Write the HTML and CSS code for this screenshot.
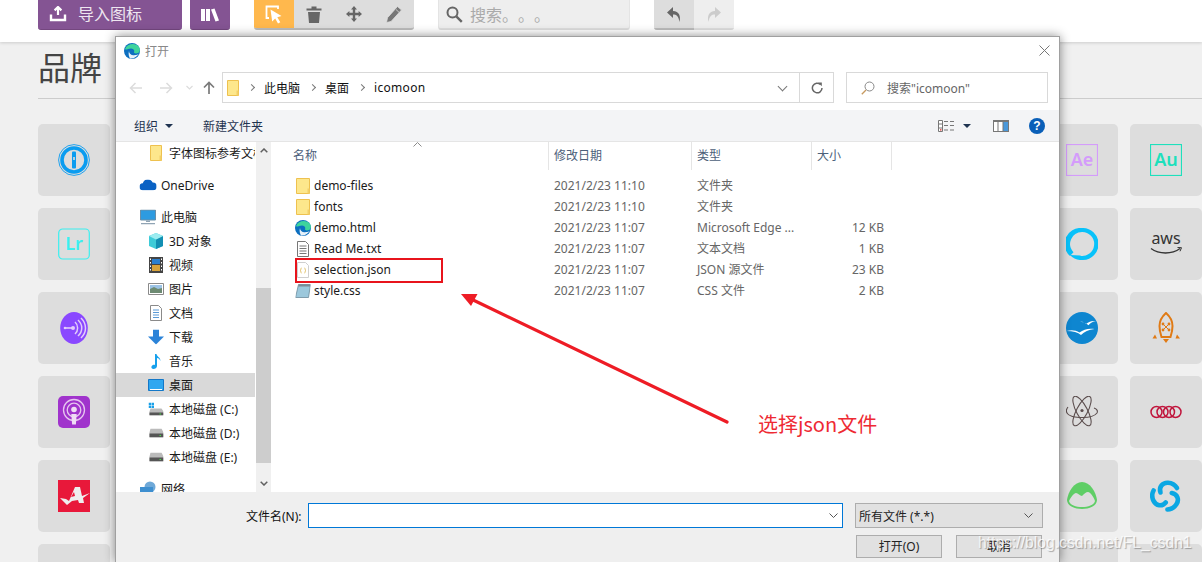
FILE: index.html
```html
<!DOCTYPE html>
<html lang="zh">
<head>
<meta charset="utf-8">
<title>IcoMoon</title>
<link rel="stylesheet" href="styles.css">
</head>
<body>
<header class="topbar">
  <button class="btn purple import">
    <svg width="18" height="16" viewBox="0 0 18 16"><path d="M9 1v8M5.6 4.400 9 1l3.400 3.400" fill="none" stroke="#fff" stroke-width="2.200"/><path d="M2 8.500v5.500h14V8.500" fill="none" stroke="#fff" stroke-width="2.400"/></svg>
    <span>导入图标</span>
  </button>
  <button class="btn purple lib">
    <svg width="20" height="14" viewBox="0 0 20 14"><path d="M1 1h4v12H1zM6 1h4v12H6zM11 1.500l3.500-1L19 12.500 15.500 13.500z" fill="#fff"/></svg>
  </button>
  <div class="group tools">
    <span class="tool active">
      <svg width="18" height="20" viewBox="0 0 18 20"><path d="M13 4V1.500H1.500V13H4" fill="none" stroke="#fff" stroke-width="1.800"/><path d="M5.500 4.500 16.500 11l-4.200 1.200 3 5-2.300 1.300-2.800-5-3 3z" fill="#fff"/></svg>
    </span>
    <span class="tool">
      <svg width="16" height="17" viewBox="0 0 16 17"><path d="M0.500 2.500h15v2H0.500zM5.500 2.500V0.500h5v2M2 6h12l-1 11H3z" fill="#666"/></svg>
    </span>
    <span class="tool">
      <svg width="16" height="16" viewBox="0 0 16 16"><path d="M8 0 11 3.400H9.200v3.400h3.400V5L16 8l-3.400 3v-1.800H9.200v3.400H11L8 16l-3-3.400h1.800V9.200H3.400V11L0 8l3.400-3v1.800h3.400V3.400H5z" fill="#666"/></svg>
    </span>
    <span class="tool">
      <svg width="16" height="17" viewBox="0 0 16 17"><path d="M11.500 0.500 15.500 4 5 15.500 0.500 16.500 1.500 11.700zM10 3.500l3 2.800" fill="#777" stroke="#ddd" stroke-width="0.800"/></svg>
    </span>
  </div>
  <div class="searchbox">
    <svg width="17" height="17" viewBox="0 0 17 17"><circle cx="6.500" cy="6.500" r="5" fill="none" stroke="#666" stroke-width="2"/><path d="m10.300 10.300 5.500 5.500" stroke="#666" stroke-width="2.400"/></svg>
    <span>搜索。。。</span>
  </div>
  <div class="group history">
    <span class="tool undo">
      <svg width="14" height="15" viewBox="0 0 14 15"><path d="M6 0 0 5.500 6 11V7.500c3.500 0 5.500 1.500 6.500 7.500 1.500-6-.5-11-6.500-11z" fill="#666"/></svg>
    </span>
    <span class="tool redo">
      <svg width="14" height="15" viewBox="0 0 14 15"><path d="M8 0l6 5.500L8 11V7.500c-3.500 0-5.500 1.500-6.500 7.500C0 9 2 4 8 4z" fill="#ccc"/></svg>
    </span>
  </div>
</header>

<main class="content">
  <h1 class="heading">品牌</h1>
  <div class="tiles">
    <div class="tile">
      <svg class="ico" viewBox="0 0 32 32"><circle cx="16" cy="16" r="15.400" fill="none" stroke="#0a9cf0" stroke-width="0.900"/><circle cx="16" cy="16" r="12" fill="none" stroke="#0a9cf0" stroke-width="3.600"/><rect x="14" y="7.500" width="4" height="17" rx="1" fill="#0a9cf0"/><path d="M15.200 13h1.600v3h-1.600z" fill="#ddd"/></svg>
    </div>
    <div class="tile c13">
      <svg class="ico" viewBox="0 0 32 32"><rect x="0.500" y="0.500" width="31" height="31" fill="none" stroke="#d49cfb" stroke-width="1.200"/><text x="16" y="21.500" class="lg" fill="#d49cfb">Ae</text></svg>
    </div>
    <div class="tile">
      <svg class="ico" viewBox="0 0 32 32"><rect x="0.500" y="0.500" width="31" height="31" fill="none" stroke="#1ee0bc" stroke-width="1.200"/><text x="16" y="21.500" class="lg" fill="#1ee0bc">Au</text></svg>
    </div>

    <div class="tile">
      <svg class="ico" viewBox="0 0 32 32"><rect x="0.700" y="1" width="30.600" height="30" rx="4" fill="none" stroke="#3af0f0" stroke-width="1.200"/><text x="16" y="22" class="lg" fill="#3af0f0">Lr</text></svg>
    </div>
    <div class="tile c13">
      <svg class="ico" viewBox="0 0 32 32"><path d="M16 0a16 16 0 0 1 1 32l-3.500 0 .5-4.200A12 12 0 1 0 16 4a12 12 0 0 0-8.500 20.300L4 28A16 16 0 0 1 16 0z" fill="#08c2fa"/><path d="M4 27A16 16 0 0 0 14 32l.4-4.500z" fill="#08c2fa"/></svg>
    </div>
    <div class="tile">
      <svg class="ico" viewBox="0 0 32 32"><text x="16" y="16" class="aws">aws</text><path d="M1 20.500c8 6 21 6 29 0" fill="none" stroke="#333" stroke-width="1.400"/><path d="M27.500 19.500l4 .2-1.500 3.600" fill="none" stroke="#333" stroke-width="1"/></svg>
    </div>

    <div class="tile">
      <svg class="ico" viewBox="0 0 32 32"><ellipse cx="16" cy="16" rx="13.800" ry="16" fill="#8a48ff"/><path d="M6 16h9" stroke="#e3cdfb" stroke-width="1.600"/><circle cx="7" cy="16" r="1.300" fill="#e3cdfb"/><circle cx="15" cy="16" r="2" fill="#e3cdfb"/><path d="M17 10c3.500 3 3.500 9 0 12M20 8c5 4.500 5 11.500 0 16M23 6c6 6 6 14 0 20" fill="none" stroke="#e3cdfb" stroke-width="1.500"/></svg>
    </div>
    <div class="tile c13">
      <svg class="ico" viewBox="0 0 32 32"><circle cx="16" cy="16" r="16" fill="#0e86d0"/><path d="M14 9c3 1.500 5 1.500 6 3 2-2 5-3.500 10-3-3 .5-6 2-7.500 4.200C20 11 17 10 14 9z" fill="#fff"/><path d="M0.500 19c5-1.500 9-1 13 1.500 4-3 9-4.500 15-3.500-6 .5-10 2.500-13.500 6C12 20.500 7 19 0.500 19z" fill="#fff"/></svg>
    </div>
    <div class="tile">
      <svg class="ico" viewBox="0 0 32 32"><path d="M16 1c4.500 4 6.500 9 6.500 13 0 4-1 8-2 11h-9c-1-3-2-7-2-11C9.500 10 11.500 5 16 1z" fill="none" stroke="#e07a14" stroke-width="2"/><path d="M13 12l6 6M19 12l-6 6" stroke="#e07a14" stroke-width="1"/><circle cx="13" cy="12" r="1.400" fill="#e07a14"/><circle cx="19" cy="12" r="1.400" fill="#e07a14"/><circle cx="13" cy="18" r="1.400" fill="#e07a14"/><circle cx="19" cy="18" r="1.400" fill="#e07a14"/><path d="M5 22.500l-2.500 4h4.500zM27 22.500l-1.500 4H30zM13 27h6l-3 4z" fill="#e07a14"/></svg>
    </div>

    <div class="tile">
      <svg class="ico" viewBox="0 0 32 32"><rect x="0" y="0" width="32" height="32" rx="5" fill="#a033cc"/><circle cx="16" cy="14" r="10.500" fill="none" stroke="#e6c5ef" stroke-width="1.300"/><circle cx="16" cy="14" r="6.800" fill="none" stroke="#e6c5ef" stroke-width="1.300"/><circle cx="16" cy="13.500" r="2.800" fill="#efdcf5"/><path d="M13.300 18h5.400l-.8 10.500h-3.800z" fill="#efdcf5"/></svg>
    </div>
    <div class="tile c13">
      <svg class="ico" viewBox="0 0 32 32"><g fill="none" stroke="#5b4d4d" stroke-width="1.100"><ellipse cx="16" cy="15" rx="16.500" ry="5.500" transform="rotate(62 16 15)"/><ellipse cx="16" cy="15" rx="16.500" ry="5.500" transform="rotate(-62 16 15)"/><path d="M2 11C-2 16 2 20 9 21c8 1 18 1 22-4 1-2 0-4-3-5"/></g><circle cx="16" cy="14.500" r="1.600" fill="#5b4d4d"/></svg>
    </div>
    <div class="tile">
      <svg class="ico" viewBox="0 0 32 32"><g fill="none" stroke="#c0153c" stroke-width="1.500"><circle cx="6.500" cy="16" r="5.500"/><circle cx="12.500" cy="16" r="5.500"/><circle cx="19" cy="16" r="5.500"/><circle cx="25.500" cy="16" r="5.500"/></g></svg>
    </div>

    <div class="tile">
      <svg class="ico" viewBox="0 0 32 32"><rect width="32" height="32" fill="#e8183a"/><path d="M17 7h5l2 9 8-3-7 5 1 5h-5l-1-3-6 1-5 4-7-7 6 1 3 2zM16 12l-3 5 4-1z" fill="#eee" fill-rule="evenodd"/></svg>
    </div>
    <div class="tile c13">
      <svg class="ico" viewBox="0 0 32 32"><path d="M16 2C8 2 2 12 1 20c0 6 8 9 15 9s15-3 15-9C30 12 24 2 16 2z" fill="#5fce66"/><path d="M3 21c2-4 5-8 7-8 2 0 4 3 6 3 2-2 4-4 6-4 2 0 6 5 7 9-1 4-7 6-13 6S4 25 3 21z" fill="#ddd"/></svg>
    </div>
    <div class="tile">
      <svg class="ico" viewBox="0 0 32 32"><g fill="none" stroke="#0ba7e3" stroke-width="4.600" stroke-linecap="round"><path d="M10.500 12.500C8.500 7 12.500 2.500 18 2.800c4 .2 7 2 9 5.200"/><path d="M10.500 12.500C8.500 7 12.500 2.500 18 2.800c4 .2 7 2 9 5.200" transform="rotate(120 16 16)"/><path d="M10.500 12.500C8.500 7 12.500 2.500 18 2.800c4 .2 7 2 9 5.200" transform="rotate(240 16 16)"/></g></svg>
    </div>
    <div class="tile"></div>
    <div class="tile c13"></div>
    <div class="tile"></div>
  </div>
</main>

<section class="dialog">
  <div class="titlebar">
    <svg class="edge" width="16" height="16" viewBox="0 0 16 16"><circle cx="8" cy="8" r="8" fill="#0c6fc0"/><path d="M1 6C3 1 11-1 15 4c1.500 2 1 5-1 6-2 .8-4 .5-4-1 1-2-1-3.500-3-3.500-3 0-5 2-6 .5z" fill="#3ed49c"/><path d="M5 8c0 3 3 5 6 4 1.500 0 3-.5 4-1.500-2 3-5 5.500-9 5C5 14 4 11 5 8z" fill="#fff" opacity=".9"/></svg>
    <span class="title">打开</span>
    <svg class="close" width="11" height="11" viewBox="0 0 11 11"><path d="m.5.500 10 10M10.500.500l-10 10" stroke="#777" fill="none"/></svg>
  </div>
  <div class="addressrow">
    <svg class="nav back" width="14" height="12" viewBox="0 0 14 12"><path d="M13 6H1.500M6.500 1l-5 5 5 5" fill="none" stroke="#dcdcdc" stroke-width="1.500"/></svg>
    <svg class="nav forward" width="14" height="12" viewBox="0 0 14 12"><path d="M1 6h11.500M7.500 1l5 5-5 5" fill="none" stroke="#dcdcdc" stroke-width="1.500"/></svg>
    <svg class="nav recent" width="7" height="5" viewBox="0 0 7 5"><path d="m.5 1 3 3 3-3" fill="none" stroke="#dcdcdc" stroke-width="1.200"/></svg>
    <svg class="nav up" width="12" height="13" viewBox="0 0 12 13"><path d="M6 13V1.500M1 6.500l5-5 5 5" fill="none" stroke="#7a7a7a" stroke-width="1.700"/></svg>
    <div class="address">
      <svg width="12" height="16" viewBox="0 0 12 16"><path d="M.5.500h11v15H.5z" fill="#fde78c" stroke="#eec14f"/><path d="M9.500 10.500h2v5h-2z" fill="#f2cf68"/></svg>
      <span class="crumbsep"></span><span>此电脑</span>
      <span class="crumbsep"></span><span>桌面</span>
      <span class="crumbsep"></span><span class="crumb-last">icomoon</span>
      <span class="addr-chevron"></span>
      <span class="refresh">
        <svg width="12" height="12" viewBox="0 0 12 12"><path d="M9.500 2.500A4.800 4.800 0 1 0 11 6" fill="none" stroke="#666" stroke-width="1.500"/><path d="M7 .5h3.800v3.800z" fill="#666"/></svg>
      </span>
    </div>
    <div class="dsearch">
      <svg width="14" height="14" viewBox="0 0 14 14"><circle cx="8.500" cy="5.500" r="4.500" fill="none" stroke="#888"/><path d="M5 9 .8 13.200" stroke="#c79a60" stroke-width="1.300"/></svg>
      <span>搜索"icomoon"</span>
    </div>
  </div>
  <div class="commandbar">
    <span class="cmd">组织<i class="caret"></i></span>
    <span class="cmd new">新建文件夹</span>
    <span class="cmd-right">
      <svg width="16" height="12" viewBox="0 0 16 12"><path d="M.5.500h4v11h-4zM.5 4h4M.5 8h4" fill="#fff" stroke="#777"/><path d="M6 1.500h4M12 1.500h4M6 5.500h4M12 5.500h4M6 10h4M12 10h4" stroke="#777"/><path d="M2 9.300h1.500v1.200H2z" fill="#d22"/></svg>
      <i class="caret view"></i>
      <svg class="pane" width="16" height="12" viewBox="0 0 16 12"><path d="M0 0h16v12H0z" fill="#777"/><path d="M1 2h3.500v9H1zM5.500 2h4v9h-4z" fill="#fff"/><path d="M10.500 2h4.500v9h-4.500z" fill="#4a98da"/></svg>
      <span class="help">?</span>
    </span>
  </div>

  <div class="browser">
    <nav class="tree">
      <div class="tree-row sub cut"><svg class="ti" width="12" height="16" viewBox="0 0 12 16"><path d="M.5.500h11v15H.5z" fill="#fde78c" stroke="#eec14f"/><path d="M9.500 10.500h2v5h-2z" fill="#f2cf68"/></svg><span>字体图标参考文档</span></div>
      <div class="tree-row top gap"><svg class="ti" width="17" height="11" viewBox="0 0 16 10"><path d="M3.500 10a3.300 3.300 0 0 1-.4-6.600 5 5 0 0 1 9.300-.8 3.700 3.700 0 0 1 .3 7.400z" fill="#0a62c4"/></svg><span>OneDrive</span></div>
      <div class="tree-row top gap"><svg class="ti" width="16" height="15" viewBox="0 0 16 15"><path d="M.5.500h15v10H.5z" fill="#2e9be0" stroke="#6b8fa8"/><path d="M6 11h4v1.500H6zM1 13.500h14V15H1z" fill="#90a4b4"/></svg><span>此电脑</span></div>
      <div class="tree-row sub"><svg class="ti" width="16" height="16" viewBox="0 0 16 16"><path d="M8 0l7 3v10l-7 3-7-3V3z" fill="#3dcbd8"/><path d="M8 6.500v9.500l7-3V3z" fill="#128fb3"/><path d="M1 3l7 3.500L15 3 8 0z" fill="#9cecf0"/></svg><span>3D 对象</span></div>
      <div class="tree-row sub"><svg class="ti" width="14" height="16" viewBox="0 0 14 16"><path d="M0 0h14v16H0z" fill="#444"/><path d="M3 2h8v5H3z" fill="#2b7fce"/><path d="M3 8h8v6H3z" fill="#d8a33b"/><path d="M1 1.500h1v1.500H1zM1 5h1v1.500H1zM1 8.500h1V10H1zM1 12h1v1.500H1zM12 1.500h1v1.500h-1zM12 5h1v1.500h-1zM12 8.500h1V10h-1zM12 12h1v1.500h-1z" fill="#fff"/></svg><span>视频</span></div>
      <div class="tree-row sub"><svg class="ti" width="16" height="12" viewBox="0 0 16 12"><path d="M.5.500h15v11H.5z" fill="#fff" stroke="#8a8a8a"/><path d="M2 2h12v4H2z" fill="#9cc3e6"/><path d="M2 6l4-2 4 2 4-1v5H2z" fill="#6d8a72"/></svg><span>图片</span></div>
      <div class="tree-row sub"><svg class="ti" width="12" height="16" viewBox="0 0 12 16"><path d="M.5.500h8l3 3v12H.5z" fill="#fff" stroke="#8a8a8a"/><path d="M3 5h6M3 7.500h6M3 10h6M3 12.500h6" stroke="#5a9ad6"/></svg><span>文档</span></div>
      <div class="tree-row sub"><svg class="ti" width="16" height="15" viewBox="0 0 16 15"><path d="M5 0h6v7h5l-8 8-8-8h5z" fill="#2b83d8"/></svg><span>下载</span></div>
      <div class="tree-row sub"><svg class="ti" width="14" height="16" viewBox="0 0 14 16"><path d="M6 1h1.500c.5 3 4 3 4 7-1-2-2-3-3.500-3v8c0 2-2 3-3.500 3S2 15 2.500 13.500 5 11.500 6 12z" fill="#16a0ec"/></svg><span>音乐</span></div>
      <div class="tree-row sub selected"><svg class="ti" width="16" height="12" viewBox="0 0 16 12"><path d="M.5.500h15v11H.5z" fill="#2fa7f0" stroke="#1478c8"/><path d="M2 10.500h12" stroke="#fff"/></svg><span>桌面</span></div>
      <div class="tree-row sub"><svg class="ti" width="15" height="13" viewBox="0 0 15 13"><path d="M0 0h2.500v2.500H0zM3 0h2.500v2.500H3zM0 3h2.500v2.500H0zM3 3h2.500v2.500H3z" fill="#19a0e8"/><path d="M2 6h11l2 3v4H1V9z" fill="#bbb"/><path d="M1 10h14v3H1z" fill="#555"/><path d="M11 11h1.500v1H11z" fill="#4d4"/></svg><span>本地磁盘 (C:)</span></div>
      <div class="tree-row sub"><svg class="ti" width="15" height="9" viewBox="0 0 15 9"><path d="M2 0h11l2 4v5H1V4z" fill="#bbb"/><path d="M1 5h14v4H1z" fill="#555"/><path d="M11 6.500h1.500v1H11z" fill="#4d4"/></svg><span>本地磁盘 (D:)</span></div>
      <div class="tree-row sub"><svg class="ti" width="15" height="9" viewBox="0 0 15 9"><path d="M2 0h11l2 4v5H1V4z" fill="#bbb"/><path d="M1 5h14v4H1z" fill="#555"/><path d="M11 6.500h1.500v1H11z" fill="#4d4"/></svg><span>本地磁盘 (E:)</span></div>
      <div class="tree-row top gap"><svg class="ti" width="16" height="16" viewBox="0 0 16 16"><circle cx="10" cy="6" r="5.500" fill="#6fa9d8"/><path d="M0 6h13v10H0z" fill="#3e8fd0"/></svg><span>网络</span></div>
    </nav>
    <div class="scrollbar">
      <span class="sb-arrow"><svg width="8" height="5" viewBox="0 0 8 5"><path d="M.7 4.300 4 1l3.300 3.300" fill="none" stroke="#606060" stroke-width="1.500"/></svg></span>
      <span class="sb-track"><i class="sb-thumb"></i></span>
      <span class="sb-arrow"><svg width="8" height="5" viewBox="0 0 8 5"><path d="M.7.700 4 4 7.300.700" fill="none" stroke="#606060" stroke-width="1.500"/></svg></span>
    </div>
    <div class="files">
      <div class="colhead">
        <span class="hcell name">名称<svg class="sort" width="9" height="5" viewBox="0 0 9 5"><path d="M.5 4.500l4-4 4 4" fill="none" stroke="#8a8a8a"/></svg></span>
        <span class="hcell">修改日期</span>
        <span class="hcell">类型</span>
        <span class="hcell">大小</span>
      </div>
      <div class="row">
        <span class="fname"><svg class="fi" width="14" height="16" viewBox="0 0 14 16"><path d="M.5.500h13v15H.5z" fill="#fde78c" stroke="#eec14f"/><path d="M11.500 10.500h2v5h-2z" fill="#f2cf68"/></svg>demo-files</span>
        <span class="meta">2021/2/23 11:10</span><span class="meta">文件夹</span><span class="meta size"></span>
      </div>
      <div class="row">
        <span class="fname"><svg class="fi" width="14" height="16" viewBox="0 0 14 16"><path d="M.5.500h13v15H.5z" fill="#fde78c" stroke="#eec14f"/><path d="M11.500 10.500h2v5h-2z" fill="#f2cf68"/></svg>fonts</span>
        <span class="meta">2021/2/23 11:10</span><span class="meta">文件夹</span><span class="meta size"></span>
      </div>
      <div class="row">
        <span class="fname"><svg class="fi" width="16" height="16" viewBox="0 0 16 16"><circle cx="8" cy="8" r="8" fill="#0c6fc0"/><path d="M1 6C3 1 11-1 15 4c1.500 2 1 5-1 6-2 .8-4 .5-4-1 1-2-1-3.500-3-3.500-3 0-5 2-6 .5z" fill="#3ed49c"/><path d="M5 8c0 3 3 5 6 4 1.500 0 3-.5 4-1.500-2 3-5 5.500-9 5C5 14 4 11 5 8z" fill="#fff" opacity=".9"/></svg>demo.html</span>
        <span class="meta">2021/2/23 11:07</span><span class="meta">Microsoft Edge ...</span><span class="meta size">12 KB</span>
      </div>
      <div class="row">
        <span class="fname"><svg class="fi" width="12" height="16" viewBox="0 0 12 16"><path d="M.5.500h8l3 3v12H.5z" fill="#fff" stroke="#777"/><path d="M2.500 5h7M2.500 7.500h7M2.500 10h7M2.500 12.500h7" stroke="#777"/></svg>Read Me.txt</span>
        <span class="meta">2021/2/23 11:07</span><span class="meta">文本文档</span><span class="meta size">1 KB</span>
      </div>
      <div class="row">
        <span class="fname"><svg class="fi" width="12" height="16" viewBox="0 0 12 16"><path d="M.5.500h8l3 3v12H.5z" fill="#fff" stroke="#cfcfcf"/><path d="M4.500 6c-1 0-.5 2-1 2.500.5.500 0 2.500 1 2.500M7.500 6c1 0 .5 2 1 2.500-.5.500 0 2.500-1 2.500" fill="none" stroke="#d8b040" stroke-width=".8"/></svg>selection.json</span>
        <span class="meta">2021/2/23 11:07</span><span class="meta">JSON 源文件</span><span class="meta size">23 KB</span>
      </div>
      <div class="row">
        <span class="fname"><svg class="fi" width="15" height="15" viewBox="0 0 15 15"><path d="M3 1h12l-2 13H0z" fill="#9cc8dc" stroke="#6b8a9a" stroke-width=".8"/><path d="M3 1h12v2H3z" fill="#7a8c96"/></svg>style.css</span>
        <span class="meta">2021/2/23 11:07</span><span class="meta">CSS 文件</span><span class="meta size">2 KB</span>
      </div>
    </div>
  </div>

  <footer class="dfoot">
    <div class="foot-row">
      <label class="fn-label">文件名(N):</label>
      <div class="fn-input"><svg width="9" height="5" viewBox="0 0 9 5"><path d="m.5.500 4 4 4-4" fill="none" stroke="#555"/></svg></div>
      <div class="filetype"><span>所有文件 (*.*)</span><svg width="9" height="5" viewBox="0 0 9 5"><path d="m.5.500 4 4 4-4" fill="none" stroke="#555"/></svg></div>
    </div>
    <div class="foot-actions">
      <span class="dbtn">打开(O)</span>
      <span class="dbtn">取消</span>
    </div>
  </footer>
</section>

<div class="redbox"></div>
<svg class="arrow" width="1202" height="562" viewBox="0 0 1202 562"><path d="M727 422 469 298" stroke="#ee1c25" stroke-width="3.200" stroke-linecap="round"/><path d="M461 294h16.500l-6.500 12z" fill="#ee1c25"/></svg>
<div class="note">选择json文件</div>
<div class="watermark">https://blog.csdn.net/FL_csdn1</div>
</body>
</html>
```

FILE: styles.css
```css
* { box-sizing: border-box; }
html, body { margin: 0; height: 562px; overflow: hidden; }
body {
  position: relative;
  width: 1202px;
  background: #f0f0f0;
  font-family: "Noto Sans", "Noto Sans CJK SC", sans-serif;
  font-size: 12px;
  color: #222;
  text-spacing-trim: space-all;
}

/* app header */
.topbar {
  height: 42px;
  background: #fff;
  box-shadow: 0 1px 3px rgba(0, 0, 0, .15);
  display: flex;
  align-items: flex-start;
  padding-left: 38px;
}
.btn {
  border: 0;
  padding: 0;
  height: 30px;
  border-radius: 0 0 3px 3px;
  display: flex;
  align-items: center;
  justify-content: center;
  color: #fff;
  font: inherit;
}
.purple { background: #845493; border-bottom: 1px solid #74477f; }
.import { width: 144px; gap: 11px; justify-content: flex-start; padding: 0 0 2px 11px; font-size: 16px; line-height: 20px; color: #eee6f0; }
.lib { width: 40px; margin-left: 8px; }
.group { display: flex; height: 30px; border-radius: 0 0 3px 3px; overflow: hidden; }
.tools { margin-left: 24px; border-bottom: 2px solid #bbb; background: #ddd; }
.tool { width: 40px; height: 30px; display: flex; align-items: center; justify-content: center; }
.tools .tool { height: 28px; }
.tools .tool.active { background: #ffb84d; height: 30px; margin-bottom: -2px; }
.searchbox {
  margin-left: 24px;
  width: 192px;
  height: 30px;
  background: #eee;
  border-bottom: 2px solid #ddd;
  border-left: 1px solid #e4e4e4;
  border-right: 1px solid #e4e4e4;
  border-radius: 0 0 3px 3px;
  display: flex;
  align-items: center;
  gap: 7px;
  padding-left: 7px;
  color: #aaa;
  font-size: 16px;
}
.history { margin-left: 24px; }
.undo { background: #ddd; border-bottom: 2px solid #bbb; }
.redo { background: #eee; border-bottom: 2px solid #ddd; }

/* app page body */
.content { height: 520px; overflow: hidden; padding-left: 38px; }
.heading {
  margin: 0;
  height: 57px;
  padding-top: 1px;
  border-bottom: 1px solid #ccc;
  font-size: 32px;
  font-weight: 400;
  line-height: 50px;
  color: #444;
}
.tiles {
  margin-top: 25px;
  display: grid;
  grid-template-columns: repeat(14, 72px);
  grid-auto-rows: 72px;
  gap: 12px;
}
.tile {
  background: #ddd;
  border-radius: 5px;
  display: flex;
  align-items: center;
  justify-content: center;
}
.c13 { grid-column: 13; }
.ico { width: 32px; height: 32px; display: block; }
.lg { font: 600 18px "Noto Sans", sans-serif; text-anchor: middle; }
.aws { font: 400 16px "Noto Sans", sans-serif; text-anchor: middle; fill: #333; }

/* file dialog */
.dialog {
  position: absolute;
  left: 115px;
  top: 36px;
  width: 945px;
  height: 526px;
  background: #fff;
  border: 1px solid #a0a0a0;
  border-bottom: 0;
  box-shadow: 0 0 10px rgba(0, 0, 0, .45);
  display: flex;
  flex-direction: column;
}
.titlebar {
  height: 35px;
  flex: none;
  display: flex;
  align-items: center;
  padding: 0 9px 8px 8px;
}
.title { margin-left: 5px; color: #888; font-size: 12px; }
.close { margin-left: auto; }
.addressrow {
  flex: none;
  height: 31px;
  display: flex;
  align-items: center;
}
.nav { flex: none; }
.back { margin-left: 13px; }
.forward { margin-left: 16px; }
.recent { margin-left: 13px; }
.up { margin-left: 10px; margin-right: 7px; }
.address {
  width: 612px;
  height: 31px;
  border: 1px solid #d9d9d9;
  display: flex;
  align-items: center;
  padding-left: 4px;
  color: #111;
}
.crumbsep {
  width: 5px;
  height: 5px;
  margin: 0 10px;
  border-top: 1.500px solid #777;
  border-right: 1.500px solid #777;
  transform: rotate(45deg);
}
.crumb-last { letter-spacing: .3px; }
.addr-chevron {
  margin-left: auto;
  width: 7px;
  height: 7px;
  margin-right: 13px;
  margin-top: -3px;
  border-right: 1.500px solid #777;
  border-bottom: 1.500px solid #777;
  transform: rotate(45deg);
}
.refresh {
  width: 34px;
  height: 29px;
  border-left: 1px solid #d9d9d9;
  display: flex;
  align-items: center;
  justify-content: center;
}
.dsearch {
  margin-left: 12px;
  width: 202px;
  height: 31px;
  border: 1px solid #d9d9d9;
  display: flex;
  align-items: center;
  gap: 12px;
  padding-left: 14px;
  color: #666;
}
.commandbar {
  flex: none;
  margin-top: 7px;
  height: 32px;
  background: #f3f4f6;
  border-bottom: 1px solid #e5e5e5;
  display: flex;
  align-items: center;
  padding-left: 18px;
  color: #1f3350;
}
.cmd { display: inline-flex; align-items: center; }
.cmd.new { margin-left: 30px; }
.caret {
  display: inline-block;
  width: 0;
  height: 0;
  margin-left: 7px;
  border-left: 4px solid transparent;
  border-right: 4px solid transparent;
  border-top: 4px solid #1f3350;
}
.cmd-right { margin-left: auto; margin-right: 14px; display: flex; align-items: center; }
.caret.view { margin-left: 9px; }
.pane { margin-left: 22px; }
.help {
  margin-left: 20px;
  width: 16px;
  height: 16px;
  border-radius: 50%;
  background: #0a5fb8;
  color: #fff;
  font: 700 12px/16px "Liberation Sans", sans-serif;
  text-align: center;
}
.browser { flex: none; height: 350px; display: flex; overflow: hidden; }
.tree { width: 139px; flex: none; overflow: hidden; }
.tree-row {
  position: relative;
  height: 24px;
  display: flex;
  align-items: center;
  white-space: nowrap;
  color: #1a1a1a;
  overflow: hidden;
}
.tree-row.sub { padding-left: 53px; }
.tree-row.top { padding-left: 45px; }
.ti { position: absolute; left: 40px; top: 50%; transform: translate(-50%, -50%); }
.top .ti { left: 32px; }
.tree-row.gap { margin-top: 8px; }
.tree-row.cut { margin-top: -1px; }
.selected { background: #d9d9d9; }
.scrollbar {
  width: 15px;
  flex: none;
  margin: 0 1px;
  background: #f0f0f0;
  display: flex;
  flex-direction: column;
}
.sb-arrow { height: 17px; flex: none; display: flex; align-items: center; justify-content: center; }
.sb-track { flex: 1; display: flex; flex-direction: column; justify-content: flex-end; padding-bottom: 12px; }
.sb-thumb { display: block; height: 175px; background: #cdcdcd; }
.files { flex: 1; min-width: 0; }
.colhead, .row {
  display: grid;
  grid-template-columns: 277px 143px 120px 80px;
}
.colhead { height: 28px; margin-bottom: 5px; }
.hcell {
  position: relative;
  padding-left: 5px;
  border-right: 1px solid #e5e5e5;
  line-height: 27px;
  color: #4c607a;
}
.hcell.name { padding-left: 21px; }
.sort { position: absolute; left: 141px; top: 0; }
.row { height: 21px; align-items: center; line-height: 21px; }
.fname {
  display: flex;
  align-items: center;
  padding-left: 42px;
  position: relative;
  color: #1a1a1a;
}
.fi { position: absolute; left: 31px; top: 50%; transform: translate(-50%, -50%); }
.meta { padding-left: 5px; color: #666; white-space: nowrap; }
.size { padding: 0 8px 0 0; text-align: right; }
.dfoot {
  flex: 1;
  background: #efefef;
  padding-top: 11px;
}
.foot-row { display: flex; align-items: center; height: 25px; }
.fn-label { margin-left: 130px; width: 62px; color: #111; }
.fn-input {
  width: 535px;
  height: 25px;
  background: #fff;
  border: 1px solid #0078d7;
  display: flex;
  align-items: center;
  justify-content: flex-end;
  padding-right: 4px;
}
.filetype {
  margin-left: 12px;
  width: 188px;
  height: 25px;
  background: #e1e1e1;
  border: 1px solid #adadad;
  display: flex;
  align-items: center;
  justify-content: space-between;
  padding: 0 9px 0 3px;
  color: #222;
}
.foot-actions { display: flex; gap: 14px; margin: 7px 0 0 740px; }
.dbtn {
  width: 86px;
  height: 23px;
  background: #e1e1e1;
  border: 1px solid #adadad;
  text-align: center;
  line-height: 21px;
  color: #222;
}

/* annotations over the screenshot */
.redbox {
  position: absolute;
  left: 295px;
  top: 258px;
  width: 148px;
  height: 25px;
  border: 2px solid #e8141c;
}
.arrow { position: absolute; left: 0; top: 0; pointer-events: none; }
.note {
  position: absolute;
  left: 758px;
  top: 410px;
  font: 20px/28px "Noto Sans CJK SC", sans-serif;
  color: #ee2a33;
}
.watermark {
  position: absolute;
  left: 978px;
  top: 533px;
  font: 15.700px/20px "Liberation Sans", sans-serif;
  color: rgba(255, 255, 255, .8);
  text-shadow: 1px 1px 1px rgba(0, 0, 0, .3);
  white-space: nowrap;
}
```
